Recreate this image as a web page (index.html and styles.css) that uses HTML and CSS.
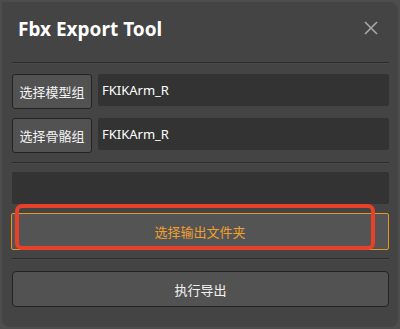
FILE: index.html
```html
<!DOCTYPE html>
<html lang="zh-CN">
<head>
    <meta charset="UTF-8">
    <meta name="viewport" content="width=device-width, initial-scale=1.0">
    <title>Fbx Export Tool</title>
    <link rel="stylesheet" href="styles.css">
</head>
<body>
    <div class="dialog">
        <div class="title-bar">
            <h1>Fbx Export Tool</h1>
            <button class="close-btn" aria-label="关闭">
                <svg width="14" height="14" viewBox="0 0 14 14">
                    <path d="M1 1 L13 13 M13 1 L1 13" stroke="#a8a8a8" stroke-width="1.6" fill="none"/>
                </svg>
            </button>
        </div>
        <hr class="sep">
        <div class="row">
            <button class="btn pick">选择模型组</button>
            <div class="field">FKIKArm_R</div>
        </div>
        <div class="row last">
            <button class="btn pick">选择骨骼组</button>
            <div class="field">FKIKArm_R</div>
        </div>
        <hr class="sep">
        <div class="field wide"></div>
        <div class="out-wrap">
            <button class="btn out">选择输出文件夹</button>
            <div class="mark"></div>
        </div>
        <hr class="sep">
        <button class="btn run">执行导出</button>
    </div>
</body>
</html>
```

FILE: styles.css
```css
body {
    margin: 0;
    background-color: #4d4d4d;
    font-family: "Noto Sans", "Noto Sans CJK SC", sans-serif;
    height: 329px;
    overflow: hidden;
}
.dialog {
    box-sizing: border-box;
    margin: 2px 2px 0 2px;
    height: 325px;
    background-color: #444444;
    border-radius: 0 8px 8px 8px;
    padding: 0 9px 0 10px;
    display: flex;
    flex-direction: column;
}
.title-bar {
    box-sizing: border-box;
    height: 60px;
    display: flex;
    align-items: center;
    justify-content: space-between;
    padding: 0 0 9px 6px;
}
h1 {
    margin: 0;
    color: #ffffff;
    font-size: 19px;
    font-weight: bold;
    padding-top: 2px;
}
.close-btn {
    background: none;
    border: none;
    padding: 0;
    margin-right: 11px;
    width: 14px;
    height: 14px;
    display: flex;
}
.sep {
    margin: 0;
    border: none;
    border-top: 1px solid #2c2c2c;
    border-bottom: 1px solid #4a4a4a;
    height: 0;
}
.row {
    display: flex;
    gap: 6px;
    margin-top: 10px;
    align-items: flex-start;
}
.row + .row {
    margin-top: 9px;
}
.row.last {
    margin-bottom: 9px;
}
.btn {
    font-family: "Noto Sans", "Noto Sans CJK SC", sans-serif;
    font-size: 13px;
    color: #f2f2f2;
    background-color: #525252;
    border: 1px solid #232323;
    border-radius: 3px;
    cursor: pointer;
}
.pick {
    width: 80px;
    height: 35px;
    padding: 0;
}
.field {
    flex: 1;
    height: 32px;
    background-color: #333333;
    border-radius: 2px;
    color: #ffffff;
    font-size: 13px;
    line-height: 32px;
    padding-left: 4px;
}
.wide {
    flex: none;
    margin-top: 8px;
    height: 32px;
}
.out-wrap {
    position: relative;
    margin: 9px 0 8px -1px;
}
.out {
    display: block;
    width: 100%;
    height: 37px;
    color: #f0a030;
    border-color: #e8961e;
    background-color: #545454;
    border-radius: 2px;
}
.mark {
    position: absolute;
    left: 4px;
    top: -9px;
    width: 352px;
    height: 38px;
    border: 4px solid #e8412a;
    border-radius: 7px;
    pointer-events: none;
}
.run {
    margin-top: 11px;
    height: 36px;
    border-radius: 4px;
}
```
